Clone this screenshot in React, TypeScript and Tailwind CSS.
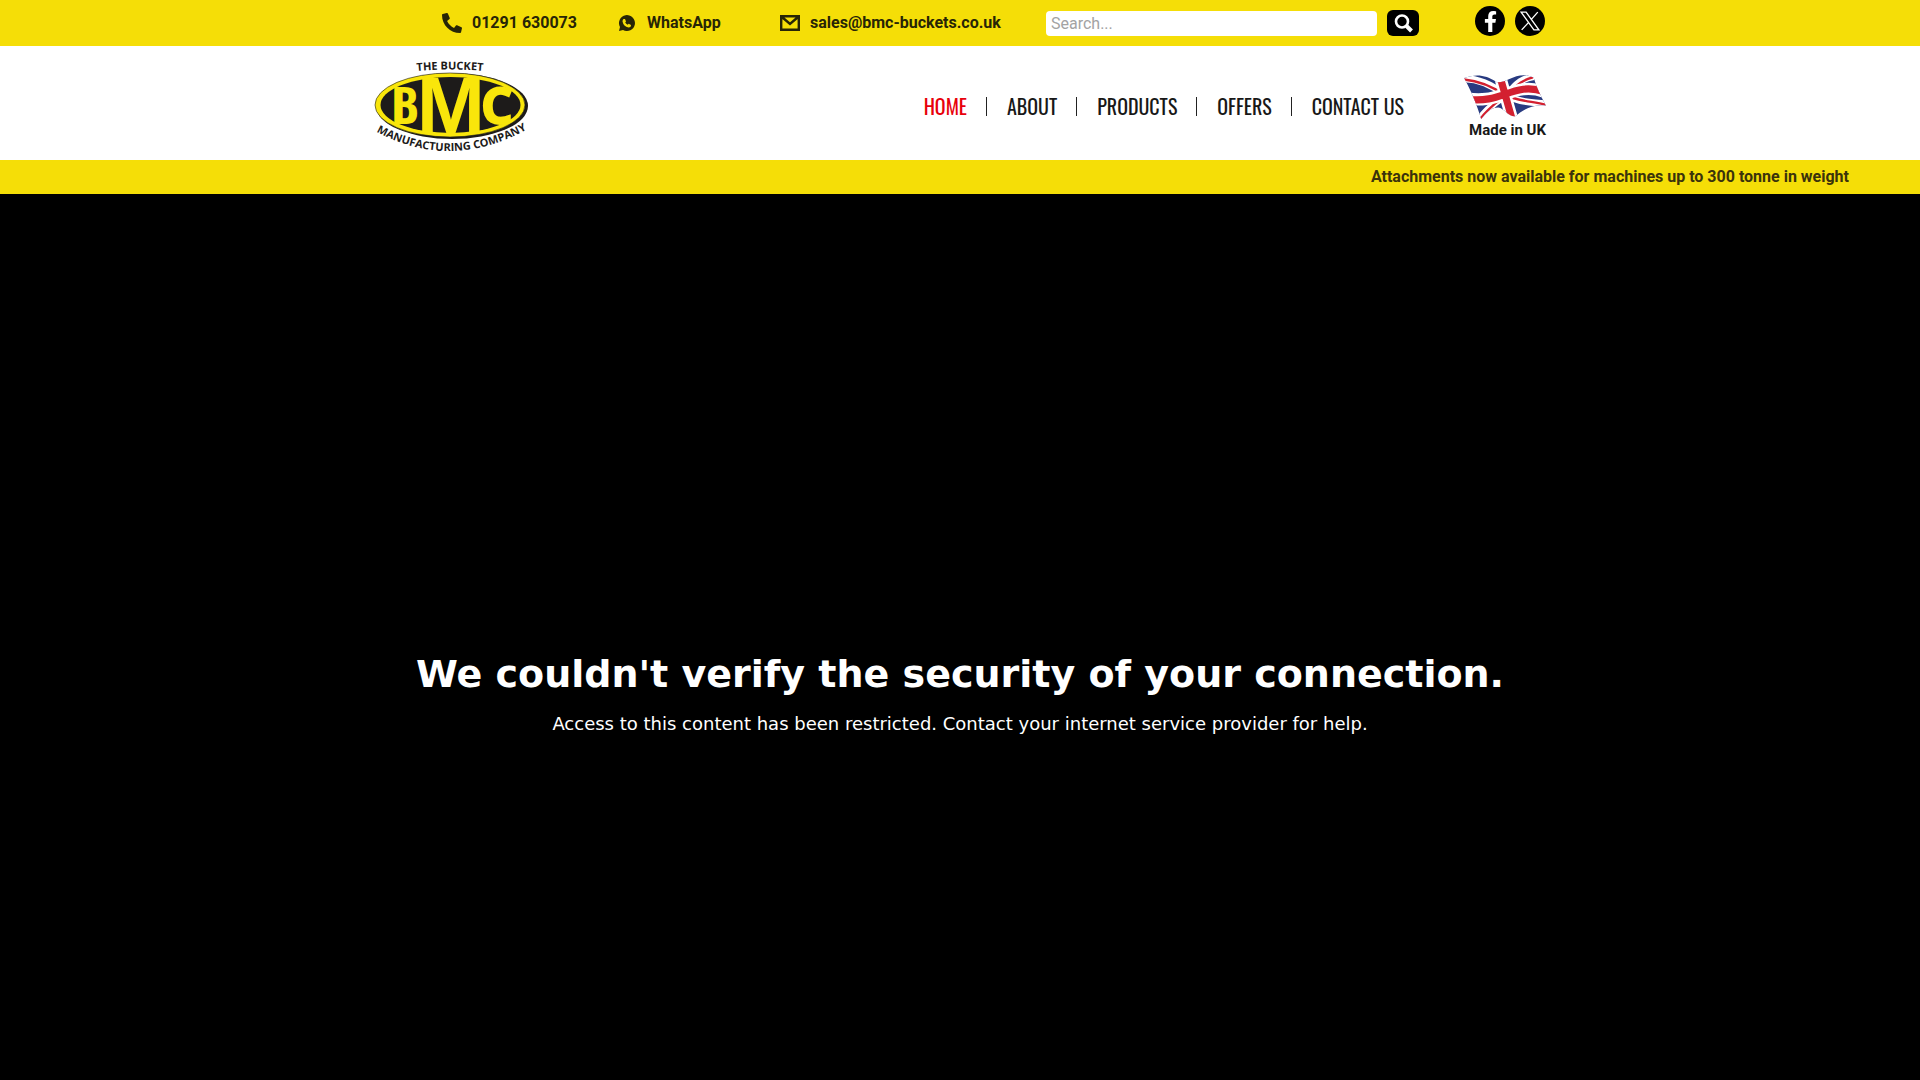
import { FaFacebookF, FaPhone } from "react-icons/fa";

const links = ["HOME", "ABOUT", "PRODUCTS", "OFFERS", "CONTACT US"];

const Logo = () => {
  return (
    <svg width="160" height="98" viewBox="370 56 160 98" role="img" aria-label="BMC">
      <defs>
        <path id="arcTop" d="M400 73 Q450 66 500 73" />
        <path id="arcBottom" d="M375 131 Q450 172 528 129" />
      </defs>
      <ellipse cx="452" cy="106" rx="76" ry="33" fill="#1d1b1a" />
      <ellipse cx="450" cy="105" rx="75" ry="32" fill="#f9e60b" stroke="#1d1b1a" strokeWidth="0.6" />
      <ellipse cx="450.5" cy="105" rx="70" ry="28" fill="#1d1b1a" />
      <g fill="#f9e60b" textAnchor="middle">
        <text x="405" y="124" fontSize="46" className="font-['Oswald',sans-serif] font-bold">B</text>
        <text x="451" y="134" fontSize="82" className="font-['Liberation_Sans',sans-serif] font-bold">M</text>
        <text x="497" y="124" fontSize="50" stroke="#f9e60b" strokeWidth="2" className="font-['Open_Sans',sans-serif] font-bold">C</text>
      </g>
      <g fill="#1d1b1a" textAnchor="middle" fontSize="11" className="font-['Open_Sans',sans-serif] font-bold">
        <text><textPath href="#arcTop" startOffset="50%">THE BUCKET</textPath></text>
        <text><textPath href="#arcBottom" startOffset="50%">MANUFACTURING COMPANY</textPath></text>
      </g>
    </svg>
  );
};

const Flag = () => {
  return (
    <svg width="82" height="46" viewBox="0 0 240 135" role="img" aria-label="Union Jack">
      <defs>
        <clipPath id="wave">
          <path d="M0 12 C35 0 62 2 96 24 C125 26 145 0 184 4 L204 10 C212 40 226 64 240 93 C200 86 170 108 150 124 C130 126 118 100 100 98 C80 98 66 112 50 132 C38 92 20 48 0 12Z" />
        </clipPath>
      </defs>
      <g clipPath="url(#wave)">
        <path fill="#283a80" d="M0 0H240V135H0Z" />
        <path fill="none" stroke="#fff" strokeWidth="20" d="M0 14 C45 14 85 34 120 62 C160 84 200 82 240 88 M44 134 C66 100 95 82 120 64 C145 45 155 15 205 8" />
        <path fill="none" stroke="#d32030" strokeWidth="7" d="M0 16 C45 20 85 38 120 62 C160 80 200 80 240 90 M46 134 C68 102 95 84 120 64 C145 48 158 20 202 10" />
        <path fill="none" stroke="#fff" strokeWidth="36" d="M10 72 C60 80 90 68 120 60 C155 46 190 36 235 52 M106 10 L140 130" />
        <path fill="none" stroke="#d32030" strokeWidth="21" d="M8 74 C60 80 90 70 120 60 C155 46 190 36 235 52 M106 10 L140 130" />
      </g>
    </svg>
  );
};

const TopBar = () => {
  return (
    <div className="bg-[#f5de07] h-[46px]">
      <div className="max-w-[1180px] mx-auto h-full pl-[72px] pr-[5px] flex items-center font-bold text-[#272506]">
        <a href="tel:01291630073" className="w-[176px] flex items-center gap-[10px]">
          <FaPhone size={20} className="-scale-x-100" />
          01291 630073
        </a>
        <a href="#whatsapp" className="w-[162px] flex items-center gap-3">
          <svg width="17" height="17" viewBox="0 0 17 17">
            <path fill="currentColor" d="M1 16 L2 12 A8 8 0 1 1 5 15Z" />
            <path fill="#f5de07" d="M5.5 4 L7 4 L8 6.5 L7.2 7.5 Q8 9 9.7 9.8 L10.7 8.8 L13 10 Q13 12.5 10.5 12.5 Q5.5 11.5 4.5 6.5 Q4.5 4.5 5.5 4Z" />
          </svg>
          WhatsApp
        </a>
        <a href="mailto:sales@bmc-buckets.co.uk" className="w-[266px] flex items-center gap-[10px]">
          <svg width="20" height="16" viewBox="0 0 20 16" fill="none" stroke="currentColor" strokeWidth="2.4">
            <path d="M1.2 1.2H18.8V14.8H1.2Z M2.5 2.5L10 9L17.5 2.5" />
          </svg>
          sales@bmc-buckets.co.uk
        </a>
        <form className="flex-1 flex items-center gap-[10px]">
          <input
            type="search"
            aria-label="Search"
            placeholder="Search..."
            className="flex-1 min-w-0 h-[25px] rounded bg-white px-[5px] font-normal text-base placeholder:text-[#a3a3a3]"
          />
          <button type="button" aria-label="Search" className="w-8 h-[26px] rounded-md bg-black text-white flex items-center justify-center">
            <svg width="20" height="20" viewBox="0 0 20 20" fill="none" stroke="currentColor">
              <circle cx="9" cy="8.5" r="6" strokeWidth="2.6" />
              <path d="M13.5 13L18.5 18" strokeWidth="4" />
            </svg>
          </button>
        </form>
        <div className="ml-14 mb-1 flex gap-[10px]">
          <a href="#facebook" aria-label="Facebook" className="size-[30px] rounded-full bg-black text-white flex items-center justify-center">
            <FaFacebookF size={21} />
          </a>
          <a href="#x" aria-label="X" className="size-[30px] rounded-full bg-black flex items-center justify-center">
            <svg width="20" height="20" viewBox="0 0 18 18" fill="none" stroke="#fff" strokeWidth="1.2">
              <path d="M1 1H5.5L17 17H12.5Z M16 1L9.8 8 M7.8 10.2L1.5 17" />
            </svg>
          </a>
        </div>
      </div>
    </div>
  );
};

const Header = () => {
  return (
    <header className="bg-white h-[114px]">
      <div className="max-w-[1180px] mx-auto h-full pr-1 flex items-center">
        <a href="#home" className="mt-1">
          <Logo />
        </a>
        <nav className="ml-auto mt-1.5 flex items-center text-xl font-['Oswald',sans-serif]">
          {links.map((link, i) => (
            <div key={link} className="flex items-center">
              {i > 0 && <span className="w-px h-[19px] ml-[19px] mr-5 bg-[#222]"></span>}
              <a
                href={"#" + link.toLowerCase()}
                className={`whitespace-nowrap ${i === 0 ? "text-[#e8000b]" : "text-[#181818]"}`}
              >
                {link}
              </a>
            </div>
          ))}
        </nav>
        <div className="ml-[60px] mt-2 flex flex-col items-end">
          <Flag />
          <p className="text-[15px] leading-5 font-bold text-[#181818]">Made in UK</p>
        </div>
      </div>
    </header>
  );
};

const App = () => {
  return (
    <div className="min-h-screen flex flex-col bg-black font-['Roboto',sans-serif]">
      <TopBar />
      <Header />
      <div className="bg-[#f5de07] h-[34px] flex items-center justify-end pr-[71px] overflow-hidden">
        <p className="font-bold text-[#3b330b] whitespace-nowrap">
          Attachments now available for machines up to 300 tonne in weight
        </p>
      </div>
      <main className="flex-1 pt-[456px] px-4 text-center text-white font-['DejaVu_Sans',sans-serif]">
        <h1 className="text-[38px] leading-[48px] font-bold">We couldn't verify the security of your connection.</h1>
        <p className="mt-3 text-lg">Access to this content has been restricted. Contact your internet service provider for help.</p>
      </main>
    </div>
  );
};

export default App;
